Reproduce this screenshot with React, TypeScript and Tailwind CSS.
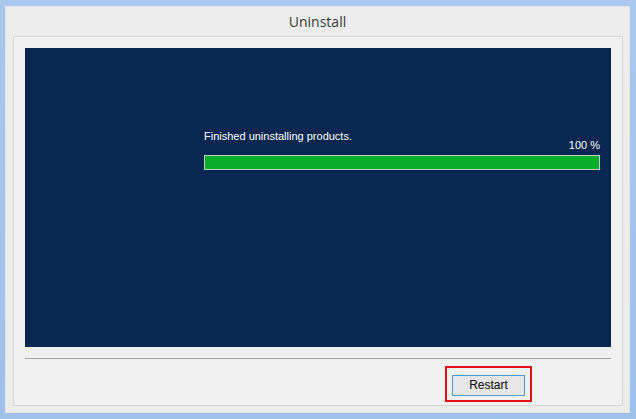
import React from "react";

const ui = { fontFamily: "'Liberation Sans', 'DejaVu Sans', sans-serif" };

export default function App() {
  return (
    <div
      className="w-[636px] h-[419px] pt-[6px] pl-[5px] pr-[6px] pb-[6px] bg-gradient-to-b from-[#a9c8ee] to-[#9fc0ea]"
      style={ui}
    >
      <div className="flex flex-col h-full bg-[#ececec] border border-[#e4e4e4]">
        {/* title */}
        <div className="h-[29px] flex items-center justify-center text-[14px] text-[#3a3a3a]" style={{ fontFamily: "'Open Sans', 'Liberation Sans', sans-serif" }}>
          Uninstall
        </div>

        <div className="flex-1 flex flex-col ml-[7px] mr-[6px] mb-[6px] border border-[#d6d6d6] bg-[#f0f0f0] p-[11px] pb-0">
          <div className="h-[299px] bg-[#0a2751] pl-[179px] pr-[11px] pt-[81px] text-white text-[11px]">
            <div className="flex justify-between items-start">
              <p className="leading-[14px]">Finished uninstalling products.</p>
              <p className="leading-[14px] mt-[9px]">100 %</p>
            </div>
            <div className="mt-[3px] h-[15px] border border-[#b4d2c0] bg-[#0aad2b]" />
          </div>

          <div className="mt-[11px] h-px bg-[#a0a0a0]" />

          <div className="flex justify-end pr-[79px] pt-[7px]">
            <div className="border-2 border-[#e0101a] px-[5px] py-[4px]">
              <button className="w-[73px] h-[21px] border border-[#4b98d6] bg-[#e6e6e6] text-[12px] text-black leading-none">
                Restart
              </button>
            </div>
          </div>
        </div>
      </div>
    </div>
  );
}
